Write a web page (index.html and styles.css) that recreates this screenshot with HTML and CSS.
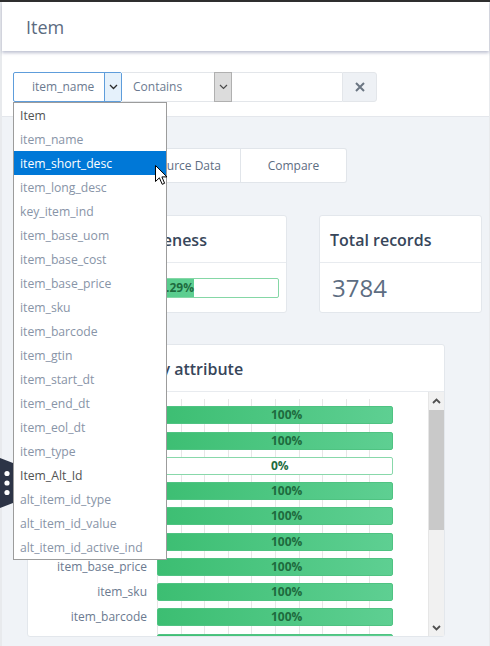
FILE: index.html
```html
<!DOCTYPE html>
<html lang="en">
<head>
<meta charset="utf-8">
<title>Item</title>
<link rel="stylesheet" href="styles.css">
</head>
<body>
<div class="topline"></div>
<div class="app">
  <header class="header">Item</header>
  <section class="filters">
    <div class="filter-group">
      <div class="select select-name">
        <span class="select-text">item_name</span>
        <span class="select-arrow arrow-blue"><svg width="9" height="6" viewBox="0 0 9 6"><path d="M1 1 L4.5 4.5 L8 1" fill="none" stroke="#2b2b2b" stroke-width="1.3"/></svg></span>
      </div>
      <div class="select select-op">
        <span class="select-text">Contains</span>
        <span class="select-arrow arrow-gray"><svg width="9" height="6" viewBox="0 0 9 6"><path d="M1 1 L4.5 4.5 L8 1" fill="none" stroke="#4a4a4a" stroke-width="1.2"/></svg></span>
      </div>
      <div class="filter-input"></div>
      <div class="clear-btn"><svg width="10" height="10" viewBox="0 0 10 10"><path d="M1 1 L9 9 M9 1 L1 9" stroke="#6b7682" stroke-width="2"/></svg></div>
      <ul class="dropdown">
        <li class="opt-head">Item</li>
        <li>item_name</li>
        <li class="opt-active">item_short_desc</li>
        <li>item_long_desc</li>
        <li>key_item_ind</li>
        <li>item_base_uom</li>
        <li>item_base_cost</li>
        <li>item_base_price</li>
        <li>item_sku</li>
        <li>item_barcode</li>
        <li>item_gtin</li>
        <li>item_start_dt</li>
        <li>item_end_dt</li>
        <li>item_eol_dt</li>
        <li>item_type</li>
        <li class="opt-head">Item_Alt_Id</li>
        <li>alt_item_id_type</li>
        <li>alt_item_id_value</li>
        <li>alt_item_id_active_ind</li>
      </ul>
    </div>
  </section>
  <main class="main">
    <div class="tabs">
      <div class="tab">Summary</div>
      <div class="tab">Source Data</div>
      <div class="tab tab-last">Compare</div>
    </div>
    <div class="cards">
      <div class="card card-completeness">
        <div class="card-head">Overall Completeness</div>
        <div class="card-body">
          <div class="progress"><div class="progress-fill" style="width:156px">64.29%</div></div>
        </div>
      </div>
      <div class="card card-total">
        <div class="card-head">Total records</div>
        <div class="card-body"><span class="total-value">3784</span></div>
      </div>
    </div>
    <div class="card card-chart">
      <div class="card-head">Completeness by attribute</div>
      <div class="chart-body">
        <div class="chart">
          <div class="row"><span class="label">item_name</span><div class="track"><div class="bar">100%</div></div></div>
          <div class="row"><span class="label">item_short_desc</span><div class="track"><div class="bar">100%</div></div></div>
          <div class="row"><span class="label">item_long_desc</span><div class="track"><div class="bar bar-zero">0%</div></div></div>
          <div class="row"><span class="label">key_item_ind</span><div class="track"><div class="bar">100%</div></div></div>
          <div class="row"><span class="label">item_base_uom</span><div class="track"><div class="bar">100%</div></div></div>
          <div class="row"><span class="label">item_base_cost</span><div class="track"><div class="bar">100%</div></div></div>
          <div class="row"><span class="label">item_base_price</span><div class="track"><div class="bar">100%</div></div></div>
          <div class="row"><span class="label">item_sku</span><div class="track"><div class="bar">100%</div></div></div>
          <div class="row"><span class="label">item_barcode</span><div class="track"><div class="bar">100%</div></div></div>
          <div class="row"><span class="label">item_gtin</span><div class="track"><div class="bar">100%</div></div></div>
        </div>
        <div class="scrollbar">
          <div class="sb-up"><svg width="9" height="6" viewBox="0 0 9 6"><path d="M1 5 L4.5 1.5 L8 5" fill="none" stroke="#505050" stroke-width="1.8"/></svg></div>
          <div class="sb-thumb"></div>
          <div class="sb-space"></div>
          <div class="sb-down"><svg width="9" height="6" viewBox="0 0 9 6"><path d="M1 1 L4.5 4.5 L8 1" fill="none" stroke="#505050" stroke-width="1.8"/></svg></div>
        </div>
      </div>
    </div>
  </main>
</div>
<div class="side-handle"><svg width="14" height="50" viewBox="0 0 14 50"><path d="M0 0 L13 5 L13 45 L0 50 Z" fill="#2c3446"/><circle cx="7" cy="15.5" r="2.6" fill="#fff"/><circle cx="7" cy="25" r="2.6" fill="#fff"/><circle cx="7" cy="34.5" r="2.6" fill="#fff"/></svg></div>
<svg class="cursor" width="13" height="21" viewBox="0 0 13 21"><path d="M0.5 0.5 L0.5 16.5 L4.4 12.8 L7.2 19.3 L9.6 18.3 L6.9 11.9 L12 11.9 Z" fill="#fff" stroke="#000" stroke-width="1" stroke-linejoin="round"/></svg>
</body>
</html>
```
FILE: styles.css
```css
html, body {
  margin: 0;
  padding: 0;
}
body {
  background: #e8eaed;
  font-family: "Open Sans", "DejaVu Sans", sans-serif;
  font-size: 12px;
  color: #5d6d82;
  height: 646px;
  overflow: hidden;
}
.topline {
  height: 2px;
  background: #2f2f2f;
}
.app {
  margin: 0 1px 0 2px;
  height: 644px;
  display: flex;
  flex-direction: column;
}
.header {
  height: 49px;
  flex: none;
  background: #fff;
  box-shadow: 0 2px 3px rgba(70, 80, 125, 0.35);
  position: relative;
  z-index: 2;
  padding-left: 24px;
  font-size: 18px;
  line-height: 51px;
  color: #5b6b80;
}
.filters {
  flex: none;
  height: 66px;
  box-sizing: border-box;
  background: #fff;
  border-bottom: 1px solid #e4e7ec;
  padding: 21px 0 0 11px;
}
.filter-group {
  position: relative;
  display: flex;
  height: 30px;
  width: 364px;
}
.select {
  display: flex;
  box-sizing: border-box;
  height: 30px;
}
.select-text {
  flex: 1;
  overflow: hidden;
  white-space: nowrap;
  line-height: 28px;
  color: #6b7a90;
}
.select-arrow {
  width: 16px;
  flex: none;
  display: flex;
  align-items: center;
  justify-content: center;
}
.select-name {
  width: 109px;
  border: 1px solid #5e9ddb;
  border-radius: 2px;
}
.select-name .select-text {
  padding: 0 12px 0 18px;
}
.arrow-blue {
  background: #e5f1fb;
  border-left: 1px solid #5e9ddb;
}
.select-op {
  width: 110px;
  border-top: 1px solid #e3e6ea;
  border-bottom: 1px solid #e3e6ea;
}
.select-op .select-text {
  padding-left: 11px;
}
.arrow-gray {
  background: #dcdcdc;
  border: 1px solid #b0b0b0;
  margin: -1px 0;
}
.filter-input {
  width: 110px;
  box-sizing: border-box;
  border-top: 1px solid #e3e6ea;
  border-bottom: 1px solid #e3e6ea;
  background: #fff;
}
.clear-btn {
  width: 35px;
  box-sizing: border-box;
  background: #eef1f5;
  border: 1px solid #e3e6ea;
  border-radius: 0 3px 3px 0;
  display: flex;
  align-items: center;
  justify-content: center;
}
.dropdown {
  position: absolute;
  top: 30px;
  left: 0;
  width: 154px;
  box-sizing: border-box;
  margin: 0;
  padding: 0;
  list-style: none;
  background: #fff;
  border: 1px solid #9c9c9c;
  z-index: 10;
}
.dropdown li {
  height: 24px;
  line-height: 25px;
  padding-left: 6px;
  font-size: 12.2px;
  color: #8894a7;
  white-space: nowrap;
}
.dropdown li.opt-head {
  color: #525252;
}
.dropdown li.opt-active {
  background: #0078d7;
  color: #fff;
}
.main {
  flex: 1;
  background: #f0f3f7;
  padding: 31px 0 0 25px;
  overflow: hidden;
}
.tabs {
  display: flex;
  height: 35px;
}
.tab {
  width: 107px;
  box-sizing: border-box;
  background: #fff;
  border: 1px solid #e1e5ea;
  border-left: none;
  text-align: center;
  line-height: 34px;
  color: #5d6d82;
}
.tab:first-child {
  border-left: 1px solid #e1e5ea;
  border-radius: 3px 0 0 3px;
}
.tab-last {
  width: 106px;
  border-radius: 0 3px 3px 0;
}
.cards {
  display: flex;
  gap: 32px;
  margin-top: 32px;
  height: 98px;
}
.card {
  background: #fff;
  border: 1px solid #e3e7ec;
  border-radius: 3px;
  box-sizing: border-box;
}
.card-completeness {
  width: 260px;
}
.card-total {
  width: 163px;
}
.card-head {
  height: 47px;
  box-sizing: border-box;
  border-bottom: 1px solid #e8ebef;
  padding-left: 10px;
  font-size: 16px;
  font-weight: 600;
  line-height: 48px;
  color: #37465a;
  white-space: nowrap;
}
.card-body {
  height: 49px;
  display: flex;
  align-items: center;
  padding: 0 7px 0 9px;
}
.progress {
  flex: 1;
  height: 20px;
  box-sizing: border-box;
  border: 1px solid #85d7a6;
  border-radius: 2px;
  display: flex;
}
.progress-fill {
  background: linear-gradient(to right, #3fbf75, #5ecf92);
  text-align: right;
  font-weight: 700;
  font-size: 12px;
  line-height: 18px;
  color: #1e6b3e;
}
.total-value {
  font-size: 24px;
  padding-left: 3px;
  color: #5d6d82;
}
.card-chart {
  width: 418px;
  height: 293px;
  margin-top: 31px;
  display: flex;
  flex-direction: column;
}
.chart-body {
  flex: 1;
  display: flex;
  overflow: hidden;
}
.chart {
  flex: 1;
  overflow: hidden;
  padding-top: 7px;
}
.row {
  display: flex;
  align-items: flex-end;
  height: 25.25px;
}
.label {
  width: 119px;
  margin-right: 10px;
  height: 18px;
  line-height: 18px;
  text-align: right;
  color: #6b7a90;
  white-space: nowrap;
}
.track {
  width: 236px;
  height: 25.25px;
  box-sizing: border-box;
  padding-top: 7.25px;
  background: repeating-linear-gradient(to right, #e6e6e6 0, #e6e6e6 1px, transparent 1px, transparent 23.6px);
}
.bar {
  height: 18px;
  box-sizing: border-box;
  border: 1px solid #4fc382;
  border-radius: 2px;
  background: linear-gradient(to right, #3cbe72, #5ecf92);
  padding-left: 113px;
  font-weight: 700;
  font-size: 12px;
  line-height: 16px;
  color: #1e6b3e;
}
.bar-zero {
  background: #fff;
  border-color: #88d8aa;
}
.scrollbar {
  width: 15px;
  border-left: 1px solid #e6e6e6;
  background: #f1f1f1;
  display: flex;
  flex-direction: column;
}
.sb-up {
  height: 18px;
  display: flex;
  align-items: center;
  justify-content: center;
}
.sb-thumb {
  height: 120px;
  background: #c9c9c9;
}
.sb-space {
  flex: 1;
}
.sb-down {
  height: 17px;
  display: flex;
  align-items: center;
  justify-content: center;
}
.side-handle {
  position: absolute;
  left: 0;
  top: 458px;
  width: 14px;
  height: 50px;
  z-index: 5;
}
.side-handle svg {
  display: block;
}
.cursor {
  position: absolute;
  left: 155px;
  top: 165px;
  z-index: 20;
}
```
